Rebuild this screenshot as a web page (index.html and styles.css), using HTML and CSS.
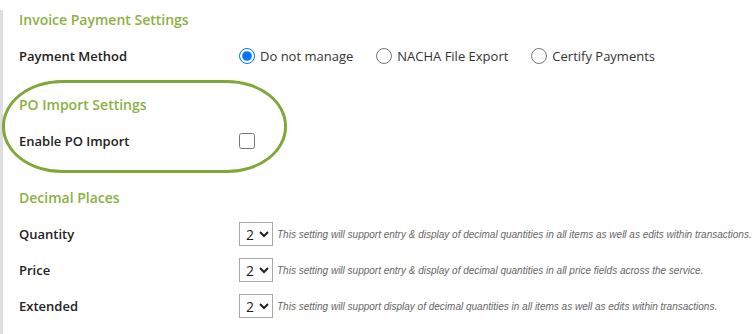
FILE: index.html
```html
<!DOCTYPE html>
<html>
<head>
<meta charset="utf-8">
<link rel="stylesheet" href="styles.css">
</head>
<body>
<div class="page">
  <h2 class="section-title first">Invoice Payment Settings</h2>
  <div class="row">
    <div class="label">Payment Method</div>
    <div class="field radios">
      <label class="radio"><input type="radio" name="pm" checked> Do not manage</label>
      <label class="radio"><input type="radio" name="pm"> NACHA File Export</label>
      <label class="radio"><input type="radio" name="pm"> Certify Payments</label>
    </div>
  </div>

  <div class="po-section">
    <h2 class="section-title">PO Import Settings</h2>
    <div class="row">
      <div class="label">Enable PO Import</div>
      <div class="field"><input type="checkbox" class="check"></div>
    </div>
    <div class="highlight"></div>
  </div>

  <h2 class="section-title decimal">Decimal Places</h2>
  <div class="row">
    <div class="label">Quantity</div>
    <div class="field"><select class="sel"><option>2</option></select><span class="help">This setting will support entry &amp; display of decimal quantities in all items as well as edits within transactions.</span></div>
  </div>
  <div class="row">
    <div class="label">Price</div>
    <div class="field"><select class="sel"><option>2</option></select><span class="help">This setting will support entry &amp; display of decimal quantities in all price fields across the service.</span></div>
  </div>
  <div class="row">
    <div class="label">Extended</div>
    <div class="field"><select class="sel"><option>2</option></select><span class="help">This setting will support display of decimal quantities in all items as well as edits within transactions.</span></div>
  </div>
</div>
</body>
</html>
```
FILE: styles.css
```css
html, body {
  margin: 0;
  padding: 0;
  background: #fff;
}
body {
  font-family: "Open Sans", "Noto Sans", sans-serif;
  color: #222;
  width: 755px;
  height: 334px;
  overflow: hidden;
}
.page {
  border-left: 3px solid #dedede;
  padding-left: 16px;
  height: 334px;
  box-sizing: border-box;
}
.section-title {
  margin: 0 0 8px 0;
  font-size: 14px;
  font-weight: 600;
  color: #8bb13f;
  height: 20px;
  line-height: 20px;
}
.section-title.first {
  margin-top: 10px;
}
.row {
  display: flex;
  align-items: center;
  height: 36px;
}
.label {
  width: 220px;
  font-size: 13px;
  font-weight: 600;
  color: #222;
}
.field {
  display: flex;
  align-items: center;
}
.radio {
  display: flex;
  align-items: center;
  font-size: 13px;
  color: #333;
  margin-right: 23px;
}
.radio input {
  width: 16px;
  height: 16px;
  margin: 0 5px 0 0;
}
.po-section {
  position: relative;
  margin-top: 21px;
}
.check {
  width: 16px;
  height: 16px;
  margin: 0;
}
.highlight {
  position: absolute;
  left: -17px;
  top: -15px;
  width: 279px;
  height: 87px;
  border: 3px solid #7fa836;
  border-radius: 60px / 46px;
  pointer-events: none;
}
.section-title.decimal {
  margin-top: 29px;
}
.sel {
  width: 34px;
  height: 24px;
  font-family: "Open Sans", sans-serif;
  font-size: 14px;
  border: 1px solid #a9a9a9;
  border-radius: 0;
  background: #fff;
  color: #222;
  padding: 0 0 0 2px;
  margin: 0 4px 0 0;
}
.help {
  font-family: "Liberation Sans", Arial, sans-serif;
  font-style: italic;
  font-size: 10px;
  color: #666;
  white-space: nowrap;
}
```
